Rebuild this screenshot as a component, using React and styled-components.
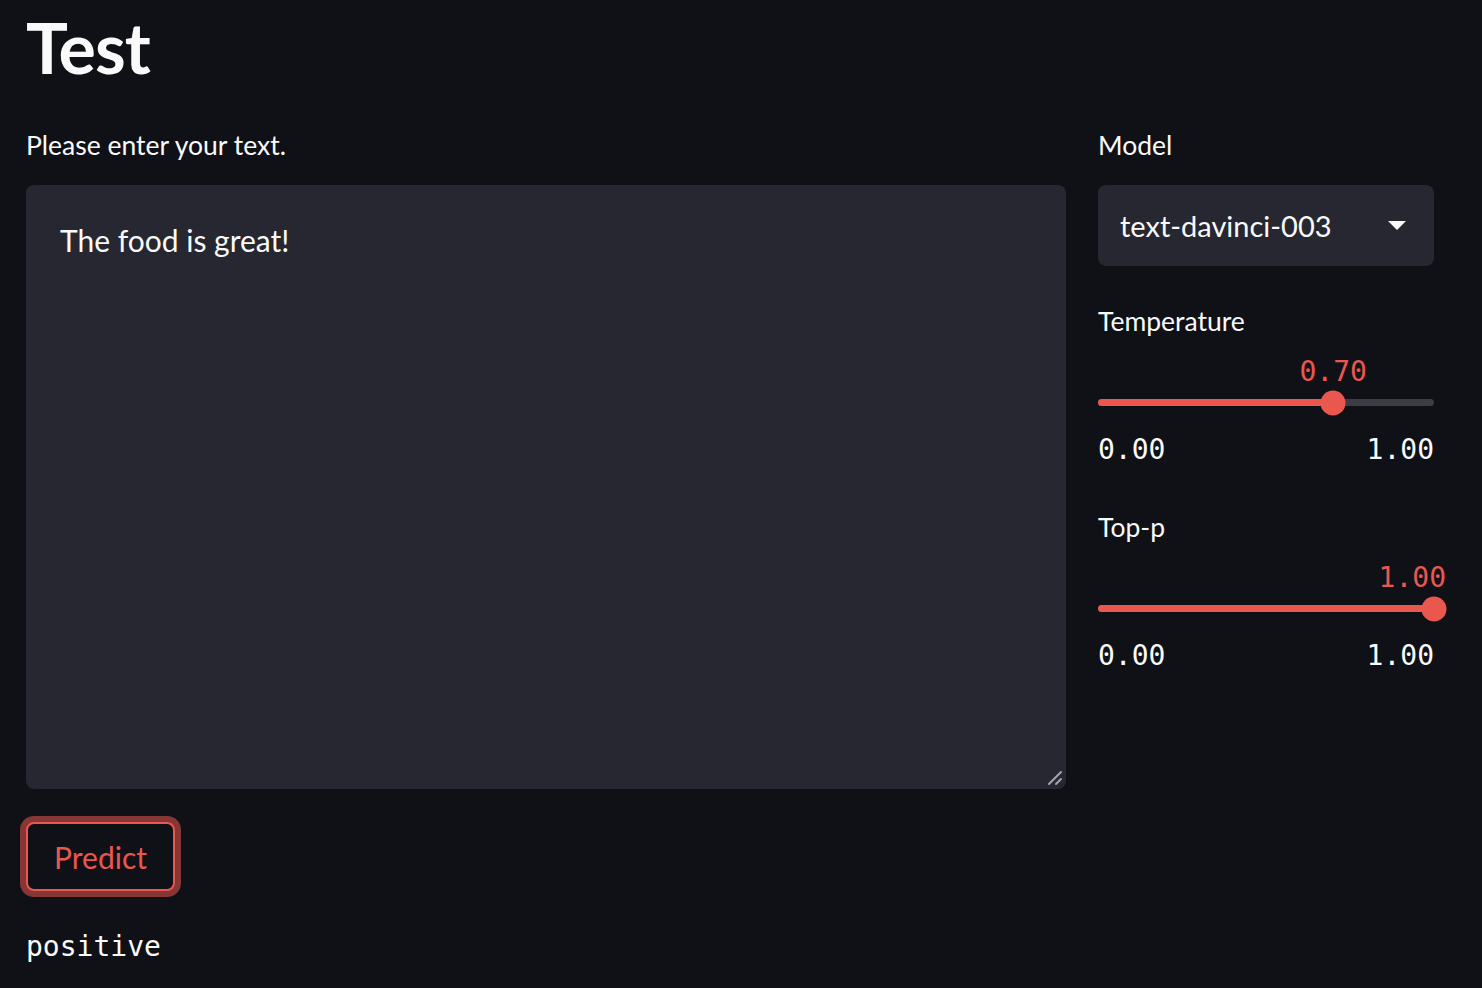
import styled, { createGlobalStyle } from "styled-components";

const RED = "#e9574f";

const Global = createGlobalStyle`
  html, body {
    margin: 0;
    background: #0f1117;
    color: #fafafa;
    font-family: Lato, "Noto Sans", sans-serif;
  }
`;

const Page = styled.div`
  padding: 11px 48px 40px 26px;
  min-height: 988px;
  box-sizing: border-box;
`;

const Title = styled.h1`
  margin: 0 0 44px;
  font-size: 70px;
  font-weight: 700;
  line-height: 72px;
  letter-spacing: -1px;
`;

const Columns = styled.div`
  display: flex;
  gap: 32px;
  align-items: flex-start;
`;

const Column = styled.div`
  width: ${(p) => p.width}px;
  display: flex;
  flex-direction: column;
`;

const Label = styled.label`
  display: block;
  font-size: 26.5px;
  line-height: 36px;
  margin-bottom: 22px;
`;

const TextBox = styled.div`
  position: relative;
`;

const TextArea = styled.textarea`
  display: block;
  box-sizing: border-box;
  width: 100%;
  height: 604px;
  background: #262730;
  border: none;
  border-radius: 8px;
  color: #fafafa;
  font-family: Lato, "Noto Sans", sans-serif;
  font-size: 30px;
  line-height: 40px;
  padding: 35px 34px;
  resize: none;
  outline: none;
`;

const Grip = styled.svg`
  position: absolute;
  right: 3px;
  bottom: 3px;
  pointer-events: none;
`;

const Select = styled.div`
  box-sizing: border-box;
  height: 81px;
  background: #262730;
  border-radius: 8px;
  display: flex;
  align-items: center;
  justify-content: space-between;
  padding: 0 28px 0 22px;
  font-size: 29px;
  margin-bottom: 37px;
`;

const SliderWrap = styled.div`
  margin-bottom: 43px;
`;

const Track = styled.div`
  position: relative;
  height: 7px;
  border-radius: 4px;
  background: #3b3c44;
  margin: 60px 0 28px;
`;

const Fill = styled.div`
  height: 100%;
  border-radius: 4px;
  background: ${RED};
`;

const Thumb = styled.div`
  position: absolute;
  top: 50%;
  width: 25px;
  height: 25px;
  border-radius: 50%;
  background: ${RED};
  transform: translate(-50%, -50%);
`;

const ThumbValue = styled.div`
  position: absolute;
  bottom: 18px;
  color: ${RED};
  font-family: "DejaVu Sans Mono", monospace;
  font-size: 28px;
  line-height: 32px;
  white-space: nowrap;
`;

const Ticks = styled.div`
  display: flex;
  justify-content: space-between;
  font-family: "DejaVu Sans Mono", monospace;
  font-size: 28px;
  line-height: 32px;
`;

const Button = styled.button`
  margin: 33px 0 0;
  padding: 0 26px;
  height: 69px;
  background: #0f1117;
  border: 2px solid ${RED};
  border-radius: 8px;
  box-shadow: 0 0 0 6px rgba(233, 87, 79, 0.55);
  color: ${RED};
  font-family: Lato, "Noto Sans", sans-serif;
  font-size: 30px;
`;

const Output = styled.div`
  margin-top: 38px;
  font-family: "DejaVu Sans Mono", monospace;
  font-size: 28px;
  line-height: 36px;
`;

function Caret() {
  return (
    <svg width="18" height="10" viewBox="0 0 18 10">
      <path d="M0 0 L18 0 L9 9 Z" fill="#fafafa" />
    </svg>
  );
}

function Slider({ label, value, min, max }) {
  const pct = ((value - min) / (max - min)) * 100;
  // near the right end the value sits flush with the thumb's right edge
  const valueStyle =
    pct > 90
      ? { left: `calc(${pct}% + 12px)`, transform: "translateX(-100%)" }
      : { left: `${pct}%`, transform: "translateX(-50%)" };
  return (
    <SliderWrap>
      <Label>{label}</Label>
      <Track>
        <Fill style={{ width: `${pct}%` }} />
        <Thumb style={{ left: `${pct}%` }} />
        <ThumbValue style={valueStyle}>{value.toFixed(2)}</ThumbValue>
      </Track>
      <Ticks>
        <span>{min.toFixed(2)}</span>
        <span>{max.toFixed(2)}</span>
      </Ticks>
    </SliderWrap>
  );
}

export default function App() {
  return (
    <Page>
      <Global />
      <Title>Test</Title>
      <Columns>
        <Column width={1040}>
          <Label>Please enter your text.</Label>
          <TextBox>
            <TextArea defaultValue="The food is great!" />
            <Grip width="16" height="16" viewBox="0 0 16 16">
              <path
                d="M2 14 L14 2 M9 14 L14 9"
                stroke="#a3a3ab"
                strokeWidth="2"
                strokeLinecap="round"
              />
            </Grip>
          </TextBox>
        </Column>
        <Column width={336}>
          <Label>Model</Label>
          <Select>
            <span>text-davinci-003</span>
            <Caret />
          </Select>
          <Slider label="Temperature" value={0.7} min={0} max={1} />
          <Slider label="Top-p" value={1} min={0} max={1} />
        </Column>
      </Columns>
      <Button>Predict</Button>
      <Output>positive</Output>
    </Page>
  );
}
